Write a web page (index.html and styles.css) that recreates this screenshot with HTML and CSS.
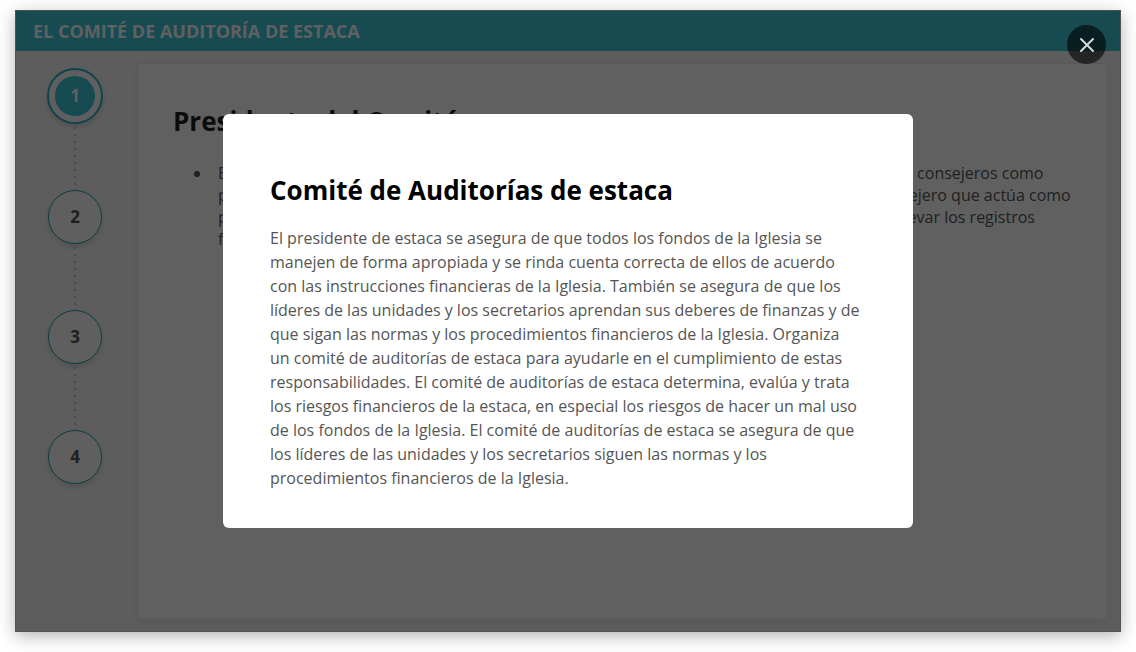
FILE: index.html
```html
<!DOCTYPE html>
<html lang="es">
<head>
<meta charset="utf-8">
<meta name="viewport" content="width=device-width, initial-scale=1">
<title>El comité de auditoría de estaca</title>
<link rel="stylesheet" href="styles.css">
</head>
<body>
<div class="frame">
  <header class="topbar"><h1 class="topbar-title">EL COMITÉ DE AUDITORÍA DE ESTACA</h1></header>
  <main class="content">
    <nav class="steps" aria-label="Pasos">
      <button type="button" class="step step-active" aria-current="step"><span class="step-fill">1</span></button>
      <svg class="link" viewBox="0 0 2 66" aria-hidden="true"><path d="M1 3V66"/></svg>
      <button type="button" class="step">2</button>
      <svg class="link" viewBox="0 0 2 66" aria-hidden="true"><path d="M1 3V66"/></svg>
      <button type="button" class="step">3</button>
      <svg class="link" viewBox="0 0 2 66" aria-hidden="true"><path d="M1 3V66"/></svg>
      <button type="button" class="step">4</button>
    </nav>
    <section class="card">
      <h2 class="card-title">Presidente del Comité</h2>
      <ul class="card-list">
        <li>El presidente de estaca organiza el comité de auditorías de estaca o designa a uno de sus dos consejeros como<br>presidente del comité de auditoría de estaca y sus unidades. Por lo general, se asigna al consejero que actúa como<br>presidente a un miembro que no tenga la responsabilidad directa de preparar, revisar o de llevar los registros<br>financieros de la estaca.</li>
      </ul>
    </section>
  </main>
  <div class="overlay">
    <div class="dialog" role="dialog" aria-modal="true" aria-labelledby="dialog-title">
      <h2 class="dialog-title" id="dialog-title">Comité de Auditorías de estaca</h2>
      <p class="dialog-text">El presidente de estaca se asegura de que todos los fondos de la Iglesia se manejen de forma apropiada y se rinda cuenta correcta de ellos de acuerdo con las instrucciones financieras de la Iglesia. También se asegura de que los líderes de las unidades y los secretarios aprendan sus deberes de finanzas y de que sigan las normas y los procedimientos financieros de la Iglesia. Organiza un comité de auditorías de estaca para ayudarle en el cumplimiento de estas responsabilidades. El comité de auditorías de estaca determina, evalúa y trata los riesgos financieros de la estaca, en especial los riesgos de hacer un mal uso de los fondos de la Iglesia. El comité de auditorías de estaca se asegura de que los líderes de las unidades y los secretarios siguen las normas y los procedimientos financieros de la Iglesia.</p>
    </div>
    <button type="button" class="close" aria-label="Cerrar"><svg viewBox="0 0 16 16" aria-hidden="true"><path d="M2 2L14 14M14 2L2 14"/></svg></button>
  </div>
</div>
</body>
</html>
```
FILE: styles.css
```css
* { box-sizing: border-box; }
body {
  margin: 0;
  padding: 10px 15px 20px;
  min-height: 100vh;
  display: flex;
  background: #fff;
  color: #555;
  font: 16px/24px "Open Sans", "Noto Sans", sans-serif;
}
h1, h2, p, ul { margin: 0; }
.frame {
  position: relative;
  flex: 1;
  display: flex;
  flex-direction: column;
  border: 1px solid #dcdcdc;
  background: #f8f8f8;
  box-shadow: 0 4px 16px rgba(0, 0, 0, 0.3);
}
.topbar { padding: 8px 17px; background: #3bc6d8; }
.topbar-title { color: #fff; font-size: 18px; line-height: 24px; font-weight: 700; }
.content { flex: 1; display: flex; gap: 34px; padding: 12px 12px 11px 31px; }
.steps { display: flex; flex-direction: column; align-items: center; padding-top: 5px; }
.step {
  display: flex;
  align-items: center;
  justify-content: center;
  width: 54px;
  height: 54px;
  padding: 0;
  border: 1px solid #1fa5b5;
  border-radius: 50%;
  background: #fcfcfc;
  color: #555;
  font: 700 17px/24px "Open Sans", "Noto Sans", sans-serif;
  box-shadow: 0 3px 6px rgba(0, 0, 0, 0.15);
}
.step-active { width: 56px; height: 56px; border: 2px solid #2bb3c5; }
.step-fill {
  width: 40px;
  height: 40px;
  border-radius: 50%;
  background: #3bc6d8;
  color: #fff;
  line-height: 40px;
}
.link { width: 2px; height: 66px; }
.link path { stroke: #c2c2c2; stroke-width: 2; stroke-dasharray: 2 5; }
.card {
  flex: 1;
  padding: 39px 35px;
  border: 1px solid #ebebeb;
  border-radius: 4px;
  background: #fff;
  box-shadow: 0 2px 10px rgba(0, 0, 0, 0.08);
}
.card-title { color: #222; font-size: 26px; line-height: 36px; }
.card-list { margin-top: 23px; padding-left: 39px; line-height: 22px; }
.card-list li { padding-left: 6px; white-space: nowrap; }
.overlay {
  position: absolute;
  inset: -1px;
  display: flex;
  align-items: center;
  justify-content: center;
  background: rgba(0, 0, 0, 0.625);
}
.dialog {
  width: 690px;
  max-width: 90%;
  padding: 58px 51px 38px 47px;
  border-radius: 6px;
  background: #fff;
}
.dialog-title { color: #000; font-size: 26px; line-height: 36px; }
.dialog-text { margin-top: 18px; }
.close {
  position: absolute;
  top: 15px;
  right: 15px;
  display: flex;
  align-items: center;
  justify-content: center;
  width: 39px;
  height: 39px;
  padding: 0;
  border: 0;
  border-radius: 50%;
  background: rgba(0, 0, 0, 0.6);
}
.close svg { width: 16px; height: 16px; }
.close path { stroke: #d4d8d8; stroke-width: 2; stroke-linecap: round; }
```
